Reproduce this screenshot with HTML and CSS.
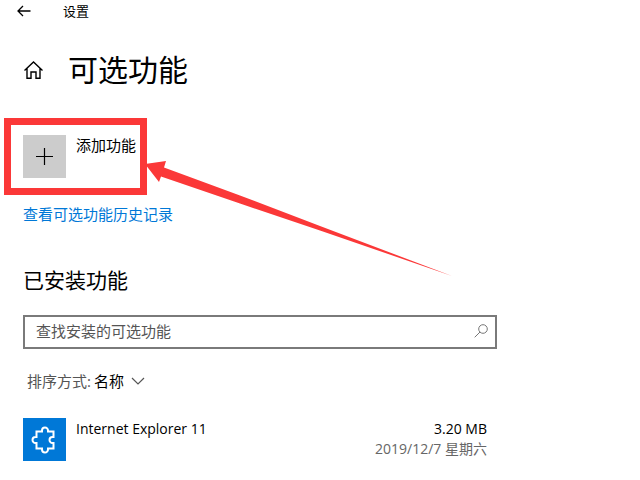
FILE: index.html
```
<!DOCTYPE html>
<html lang="zh-CN">
<head>
  <meta charset="UTF-8">
  <meta name="viewport" content="width=device-width, initial-scale=1.0">
  <title>设置</title>
  <link rel="stylesheet" href="styles.css">
</head>
<body>
  <header class="titlebar">
    <button class="back" type="button" aria-label="返回">
      <svg width="14" height="12" viewBox="0 0 14 12"><path d="M13.5 6H1M6 1L1 6l5 5" /></svg>
    </button>
    <span>设置</span>
  </header>

  <main>
    <div class="page-title">
      <a class="home" href="#" aria-label="主页">
        <svg width="20" height="20" viewBox="0 0 20 20"><path d="M1.5 10.5L10.5 2l9 8.5M4 8.5V18.2H8V12h5v6.2h4V8.5" /></svg>
      </a>
      <h1>可选功能</h1>
    </div>

    <div class="callout">
      <button class="add" type="button">
        <span class="tile tile-gray">
          <svg width="17" height="17" viewBox="0 0 17 17"><path d="M8.5 0v17M0 8.5h17" /></svg>
        </span>
        <span class="label">添加功能</span>
      </button>
      <svg class="arrow" width="310" height="117" viewBox="0 0 310 117">
        <path d="M2 4L23 1 21 7.5 97 35.5 177 66 309 116 177 70.5 97 43.5 18 16.5 16 22Z" />
      </svg>
    </div>

    <a class="history" href="#">查看可选功能历史记录</a>

    <h2>已安装功能</h2>

    <div class="search">
      <input type="text" placeholder="查找安装的可选功能" aria-label="查找安装的可选功能">
      <svg width="14" height="14" viewBox="0 0 14 14"><circle cx="9" cy="5" r="4.3" /><path d="M6 8L0.7 13.3" /></svg>
    </div>

    <button class="sort" type="button">
      <span class="sort-label">排序方式:</span>
      <span>名称</span>
      <svg width="14" height="8" viewBox="0 0 14 8"><path d="M1 1l6 6 6-6" /></svg>
    </button>

    <ul class="features">
      <li class="feature">
        <span class="tile tile-blue">
          <svg width="43" height="43" viewBox="0 0 43 43">
            <path d="M13.5 13.5H19v-1a3 3 0 0 1 6 0v1h5.5V19h-1a3 3 0 0 0 0 6h1v5.5H25v1a3 3 0 0 1-6 0v-1h-5.5V25h-1a3 3 0 0 1 0-6h1Z" />
          </svg>
        </span>
        <div class="info">
          <span>Internet Explorer 11</span>
          <div class="meta">
            <span>3.20 MB</span>
            <span class="date">2019/12/7 星期六</span>
          </div>
        </div>
      </li>
    </ul>
  </main>
</body>
</html>
```

FILE: styles.css
```
* {
  box-sizing: border-box;
}

body {
  margin: 0;
  background-color: #fff;
  color: #000;
  font-family: "Open Sans", "Noto Sans CJK SC", sans-serif;
  font-size: 15px;
  line-height: 20px;
}

button {
  padding: 0;
  border: none;
  background: none;
  color: inherit;
  font: inherit;
  cursor: pointer;
}

svg {
  display: block;
  fill: none;
  stroke: currentColor;
}

h1,
h2 {
  margin: 0;
  font-weight: 400;
}

/* Title bar */
.titlebar {
  display: flex;
  align-items: center;
  gap: 32px;
  height: 21px;
  padding-left: 17px;
  font-size: 13px;
}

.back svg {
  stroke-width: 1.3;
}

main {
  max-width: 497px;
  padding-left: 23px;
}

.page-title {
  display: flex;
  align-items: center;
  gap: 25px;
  margin-top: 29px;
}

.home {
  color: #000;
}

.home svg {
  stroke-width: 1.4;
}

h1 {
  font-size: 30px;
  line-height: 40px;
}

/* Highlighted add button */
.callout {
  position: relative;
  width: fit-content;
  margin: 28px 0 0 -19px;
  padding: 10px 4px 10px 12px;
  border: 7px solid #fb3838;
}

.arrow {
  position: absolute;
  top: 35px;
  left: 132px;
  fill: #fb3838;
  stroke: none;
}

.add {
  display: flex;
  gap: 10px;
}

.tile {
  display: flex;
  flex: none;
  align-items: center;
  justify-content: center;
  width: 43px;
  height: 43px;
}

.tile-gray {
  background-color: #ccc;
}

.tile-gray svg {
  stroke-width: 1.2;
}

.tile-blue {
  background-color: #0078d7;
  color: #fff;
}

.tile-blue svg {
  stroke-width: 2;
}

.history {
  display: block;
  width: fit-content;
  margin-top: 9px;
  color: #0078d7;
  text-decoration: none;
}

h2 {
  margin-top: 42px;
  font-size: 21px;
  line-height: 28px;
}

/* Search box */
.search {
  display: flex;
  align-items: center;
  height: 34px;
  margin-top: 21px;
  padding: 0 7px 2px 11px;
  border: 2px solid #7a7a7a;
  color: #777;
}

.search input {
  flex: 1;
  min-width: 0;
  padding: 0;
  border: none;
  outline: none;
  background: none;
  font: inherit;
}

.search input::placeholder {
  color: #555;
}

.sort {
  display: flex;
  align-items: center;
  gap: 3px;
  margin: 22px 0 0 4px;
}

.sort-label {
  color: #555;
}

.sort svg {
  margin-left: 4px;
  stroke: #555;
  stroke-width: 1.2;
}

/* Installed features */
.features {
  margin: 27px 0 0;
  padding: 0;
  list-style: none;
  font-size: 14px;
}

.feature {
  display: flex;
  gap: 10px;
}

.info {
  display: flex;
  flex: 1;
  justify-content: space-between;
  padding: 1px 10px 0 0;
}

.meta {
  display: flex;
  flex-direction: column;
  text-align: right;
}

.date {
  color: #666;
}
```
